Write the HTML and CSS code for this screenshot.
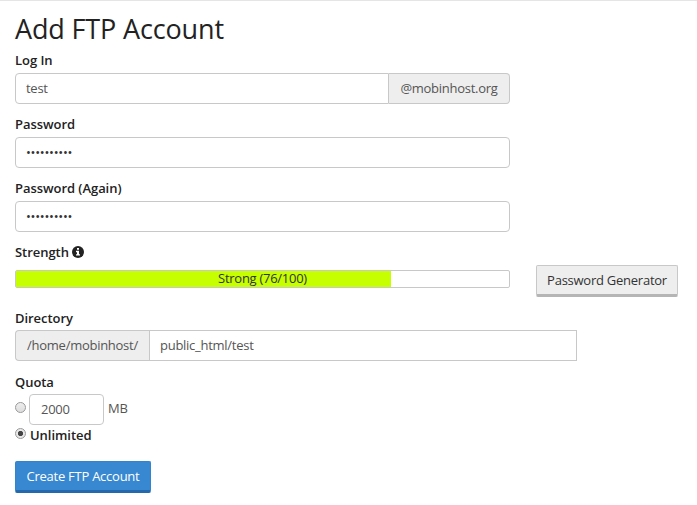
FILE: index.html
```html
<!DOCTYPE html>
<html lang="en">
<head>
    <meta charset="UTF-8">
    <meta name="viewport" content="width=device-width, initial-scale=1.0">
    <title>Add FTP Account</title>
    <link rel="stylesheet" href="styles.css">
</head>
<body>
    <form class="ftp-form">
        <h2>Add FTP Account</h2>

        <div class="form-group">
            <label for="login">Log In</label>
            <div class="input-group">
                <input type="text" id="login" class="form-control" value="test">
                <span class="addon addon-right">@mobinhost.org</span>
            </div>
        </div>

        <div class="form-group">
            <label for="password">Password</label>
            <input type="password" id="password" class="form-control" value="abcdefghij">
        </div>

        <div class="form-group">
            <label for="password2">Password (Again)</label>
            <input type="password" id="password2" class="form-control" value="abcdefghij">
        </div>

        <div class="form-group strength">
            <label>Strength
                <svg class="info-icon" viewBox="0 0 12 12">
                    <circle cx="6" cy="6" r="6" fill="#222"/>
                    <path d="M5 2h2v1.7H5zM4 4.8h3v3.4h1v1.4H4V8.2h1V6.2H4z" fill="#fff"/>
                </svg>
            </label>
            <div class="strength-row">
                <div class="meter">
                    <div class="meter-bar" style="width: 76%"></div>
                    <span class="meter-text">Strong (76/100)</span>
                </div>
                <button type="button" class="btn btn-default">Password Generator</button>
            </div>
        </div>

        <div class="form-group directory">
            <label for="directory">Directory</label>
            <div class="input-group">
                <span class="addon addon-left">/home/mobinhost/</span>
                <input type="text" id="directory" class="form-control" value="public_html/test">
            </div>
        </div>

        <div class="form-group quota">
            <label>Quota</label>
            <div class="quota-row">
                <input type="radio" name="quota">
                <input type="text" class="form-control quota-input" value="2000">
                <span class="unit">MB</span>
            </div>
            <div class="quota-row unlimited">
                <input type="radio" name="quota" id="unlimited" checked>
                <label for="unlimited">Unlimited</label>
            </div>
        </div>

        <button type="submit" class="btn btn-primary">Create FTP Account</button>
    </form>
</body>
</html>
```

FILE: styles.css
```css
* {
    box-sizing: border-box;
}

body {
    margin: 0;
    border-top: 1px solid #e5e5e5;
    background: #fff;
    color: #222;
    font-family: "Open Sans", sans-serif;
    font-size: 13px;
    line-height: 18px;
    letter-spacing: -0.27px;
}

.ftp-form {
    padding: 13px 15px 0;
}

h2 {
    margin: 0 0 7px;
    font-size: 27px;
    font-weight: 400;
    line-height: 30px;
    letter-spacing: -0.15px;
}

label {
    display: block;
    margin-bottom: 4px;
    font-weight: 600;
    letter-spacing: -0.05px;
}

.form-group {
    width: 495px;
    margin-bottom: 12px;
}

.input-group {
    display: flex;
}

.form-control {
    display: block;
    width: 100%;
    height: 31px;
    margin: 0 0 -1px;
    padding: 0 10px 2px;
    border: 1px solid #c8c8c8;
    border-radius: 4px;
    background: #fff;
    color: #555;
    font-family: inherit;
    font-size: 13px;
    letter-spacing: -0.27px;
}

.form-control[type="password"] {
    color: #333;
}

.input-group .form-control {
    flex: 1;
    min-width: 0;
}

.addon {
    height: 31px;
    margin-bottom: -1px;
    border: 1px solid #c8c8c8;
    background: #eee;
    color: #555;
    line-height: 29px;
    text-align: center;
}

.addon-right {
    width: 121px;
    border-left: 0;
    border-radius: 0 4px 4px 0;
}

.addon-left {
    width: 134px;
    border-right: 0;
    border-radius: 4px 0 0 4px;
}

#login {
    border-radius: 4px 0 0 4px;
}

#directory {
    border-radius: 0;
}

.info-icon {
    width: 12px;
    height: 12px;
    vertical-align: -1px;
}

.strength {
    width: auto;
}

.strength-row {
    display: flex;
    align-items: flex-start;
    gap: 26px;
}

.meter {
    position: relative;
    width: 495px;
    height: 18px;
    margin-top: 5px;
    border: 1px solid #c8c8c8;
    border-radius: 2px;
}

.meter-bar {
    height: 16px;
    background: #c6ff00;
}

.meter-text {
    position: absolute;
    top: -1px;
    left: 0;
    width: 100%;
    line-height: 16px;
    text-align: center;
    color: #333;
}

.btn {
    height: 32px;
    padding: 0 9px;
    border: 1px solid;
    border-bottom-width: 3px;
    border-radius: 2px;
    font-family: inherit;
    font-size: 13px;
    line-height: 28px;
    letter-spacing: -0.25px;
    white-space: nowrap;
}

.btn-default {
    width: 142px;
    border-color: #c8c8c8 #c8c8c8 #b5b5b5;
    background: #eee;
    color: #333;
}

.btn-primary {
    width: 136px;
    border-color: #3384cd #3384cd #2469ad;
    background: #3788d1;
    color: #fff;
}

.directory {
    width: 562px;
    margin-bottom: 13px;
}

.directory label {
    margin-bottom: 3px;
}

.quota > label {
    margin-bottom: 3px;
}

.quota-row {
    display: flex;
    align-items: center;
    color: #555;
}

.quota-row input[type="radio"] {
    appearance: none;
    width: 11px;
    height: 11px;
    margin: 0 3px 4px 0;
    border: 1px solid #999;
    border-radius: 50%;
    background: linear-gradient(#eee, #ddd);
}

.quota-row input[type="radio"]:checked {
    margin-bottom: 3px;
    background: radial-gradient(circle, #444 0 2.2px, #e8e8e8 3px);
}

.quota-input {
    width: 75px;
    margin: 0 4px 0 0;
    padding-left: 11px;
}

.unit {
    padding-bottom: 3px;
    letter-spacing: -0.2px;
}

.unlimited {
    margin: 1px 0 17px;
}

.unlimited label {
    margin: 0 0 0 1px;
    color: #222;
}
```
